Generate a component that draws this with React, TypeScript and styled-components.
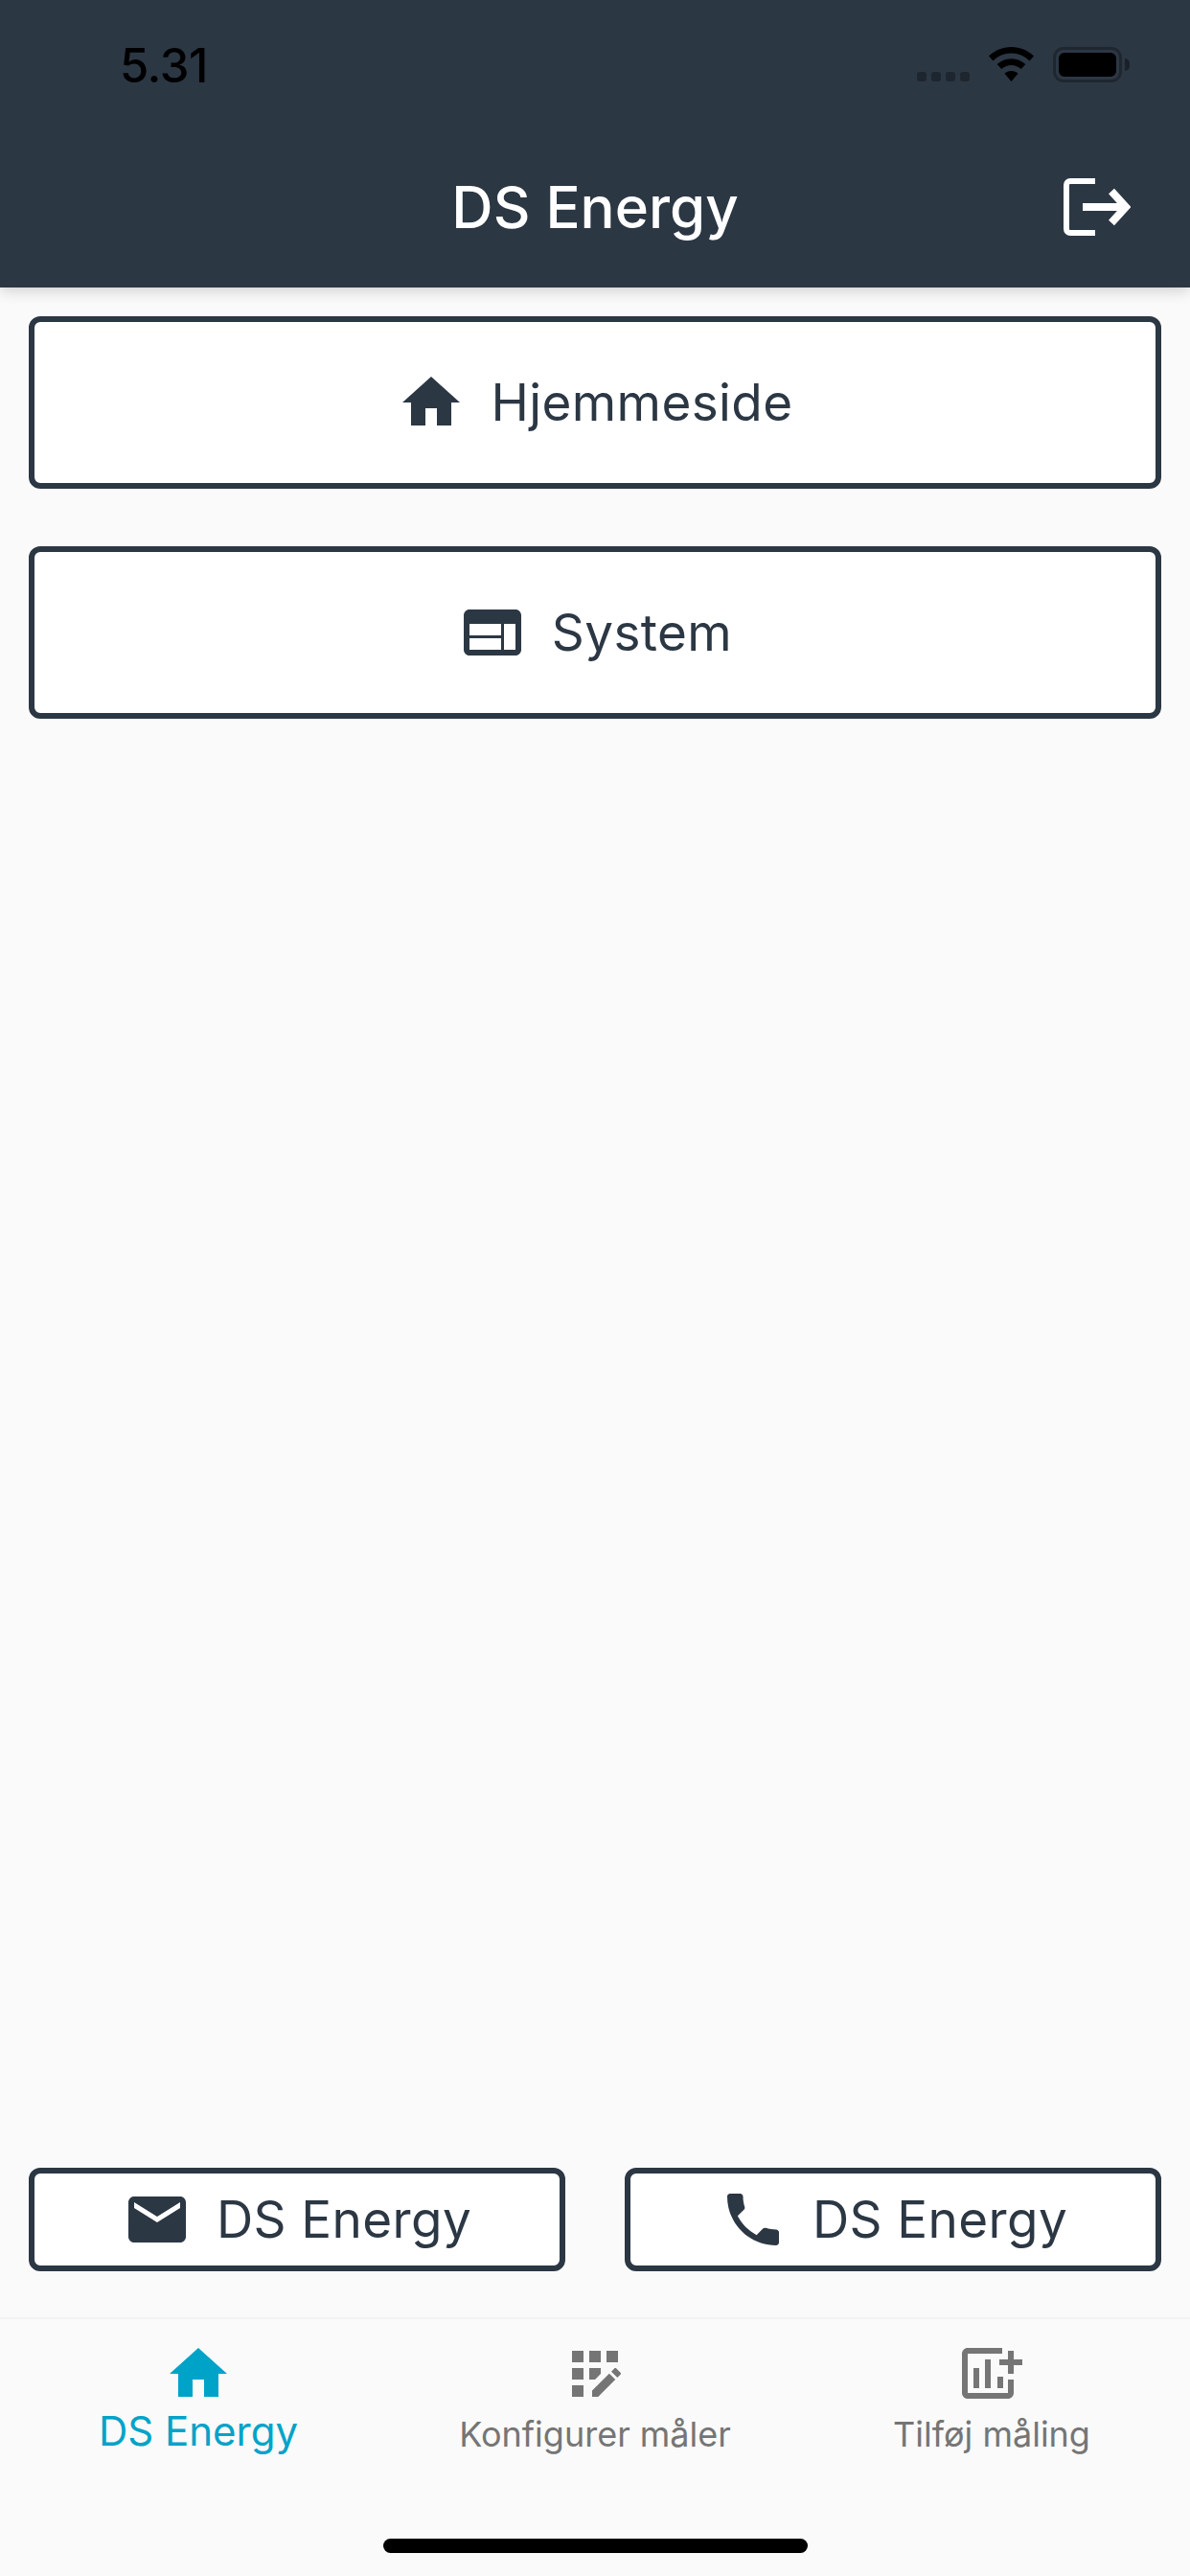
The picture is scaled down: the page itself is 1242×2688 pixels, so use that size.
import React from "react";
import styled, { createGlobalStyle } from "styled-components";

const ink = "#2c3744";
const accent = "#00a3c8";
const muted = "#757575";

const Global = createGlobalStyle`
  html, body { margin: 0; padding: 0; background: #fafafa; }
  * { box-sizing: border-box; }
`;

const Screen = styled.div`
  width: 1242px;
  height: 2688px;
  display: flex;
  flex-direction: column;
  background: #fafafa;
  font-family: Inter, "Noto Sans", sans-serif;
  overflow: hidden;
`;

const Header = styled.header`
  height: 300px;
  flex: none;
  background: ${ink};
  box-shadow: 0 4px 14px rgba(0, 0, 0, 0.16);
  display: flex;
  flex-direction: column;
  position: relative;
  z-index: 1;
`;

const StatusBar = styled.div`
  height: 132px;
  flex: none;
  display: flex;
  align-items: flex-start;
  justify-content: space-between;
  padding: 45px 71px 0 125px;
`;

const Clock = styled.span`
  font-size: 49px;
  line-height: 48px;
  font-weight: 500;
  color: #000;
  letter-spacing: -0.5px;
`;

const StatusIcons = styled.div`
  display: flex;
  align-items: flex-start;
  padding-top: 4px;
`;

const Signal = styled.div`
  display: flex;
  gap: 5px;
  margin: 26px 20px 0 0;
`;

const SignalDot = styled.span`
  width: 10px;
  height: 10px;
  border-radius: 3px;
  background: rgba(0, 0, 0, 0.32);
`;

const Battery = styled.div`
  width: 72px;
  height: 37px;
  margin-left: 20px;
  padding: 3px;
  border: 3px solid rgba(0, 0, 0, 0.3);
  border-radius: 11px;
  position: relative;
  &::after {
    content: "";
    position: absolute;
    right: -11px;
    top: 9px;
    width: 5px;
    height: 13px;
    border-radius: 0 5px 5px 0;
    background: rgba(0, 0, 0, 0.4);
  }
`;

const BatteryLevel = styled.div`
  width: 100%;
  height: 100%;
  background: #000;
  border-radius: 6px;
`;

const TitleBar = styled.div`
  flex: 1;
  display: grid;
  grid-template-columns: 1fr auto 1fr;
  align-items: center;
  padding-right: 62px;
`;

const Title = styled.h1`
  grid-column: 2;
  margin: 0 0 0 62px;
  font-size: 60px;
  line-height: 70px;
  font-weight: 500;
  color: #fff;
`;

const LogoutButton = styled.div`
  grid-column: 3;
  justify-self: end;
  display: flex;
`;

const Content = styled.main`
  flex: 1;
  display: flex;
  flex-direction: column;
  padding: 30px 30px 48px;
`;

const LinkList = styled.div`
  flex: 1;
  display: flex;
  flex-direction: column;
  gap: 60px;
`;

const OutlineButton = styled.div<{ $height: number }>`
  height: ${(p) => p.$height}px;
  display: flex;
  align-items: center;
  justify-content: center;
  gap: 26px;
  background: #fff;
  border: 6px solid ${ink};
  border-radius: 12px;
  color: ${ink};
  font-size: 53px;
  letter-spacing: 0.4px;
  line-height: 64px;
`;

const ContactRow = styled.div`
  display: grid;
  grid-template-columns: 560px 560px;
  justify-content: space-between;
`;

const TabBar = styled.nav`
  height: 270px;
  flex: none;
  display: grid;
  grid-template-columns: repeat(3, 1fr);
  align-items: start;
  background: #fafafa;
  border-top: 2px solid #f3f3f3;
  padding-top: 21px;
  position: relative;
`;

const Tab = styled.div<{ $active?: boolean }>`
  display: flex;
  flex-direction: column;
  align-items: center;
  color: ${(p) => (p.$active ? accent : muted)};
`;

const TabLabel = styled.span<{ $active?: boolean }>`
  font-size: ${(p) => (p.$active ? 42 : 36)}px;
  line-height: 48px;
  margin-top: ${(p) => (p.$active ? 0 : 3)}px;
  white-space: nowrap;
`;

const HomeIndicator = styled.div`
  position: absolute;
  left: 400px;
  bottom: 24px;
  width: 443px;
  height: 15px;
  border-radius: 8px;
  background: #000;
`;

type IconProps = { children: React.ReactNode; box?: number };

const Icon = ({ children, box = 24 }: IconProps) => (
  <svg width={72} height={72} viewBox={`0 0 ${box} ${box}`} fill="currentColor" style={{ flex: "none", display: "block" }}>
    {children}
  </svg>
);

const HomeIcon = () => (
  <Icon>
    <path d="M10 20v-6h4v6h5v-8h3L12 3 2 12h3v8z" />
  </Icon>
);

const WebIcon = () => (
  <Icon>
    <path d="M20 4H4c-1.1 0-1.99.9-1.99 2L2 18c0 1.1.9 2 2 2h16c1.1 0 2-.9 2-2V6c0-1.1-.9-2-2-2zm-5 14H4v-4h11v4zm0-5H4V9h11v4zm5 5h-4V9h4v9z" />
  </Icon>
);

const MailIcon = () => (
  <Icon>
    <path d="M20 4H4c-1.1 0-1.99.9-1.99 2L2 18c0 1.1.9 2 2 2h16c1.1 0 2-.9 2-2V6c0-1.1-.9-2-2-2zm0 4l-8 5-8-5V6l8 5 8-5v2z" />
  </Icon>
);

const PhoneIcon = () => (
  <Icon>
    <path d="M6.62 10.79c1.44 2.83 3.76 5.14 6.59 6.59l2.2-2.2c.27-.27.67-.36 1.02-.24 1.12.37 2.33.57 3.57.57.55 0 1 .45 1 1V20c0 .55-.45 1-1 1-9.39 0-17-7.61-17-17 0-.55.45-1 1-1h3.5c.55 0 1 .45 1 1 0 1.25.2 2.45.57 3.57.11.35.03.74-.25 1.02l-2.2 2.2z" />
  </Icon>
);

const RegisterIcon = () => (
  <Icon>
    <rect x="10" y="4" width="4" height="4" />
    <rect x="4" y="16" width="4" height="4" />
    <rect x="4" y="10" width="4" height="4" />
    <rect x="4" y="4" width="4" height="4" />
    <rect x="16" y="4" width="4" height="4" />
    <polygon points="11,17.86 11,20 13.1,20 19.08,14.03 16.96,11.91" />
    <polygon points="14,12.03 14,10 10,10 10,14 12.03,14" />
    <path d="M20.85,11.56l-1.41-1.41c-0.2-0.2-0.51-0.2-0.71,0l-1.06,1.06l2.12,2.12l1.06-1.06C21.05,12.07,21.05,11.76,20.85,11.56z" />
  </Icon>
);

const AddChartIcon = () => (
  <Icon box={72}>
    <path d="M47 9H11c-3.3 0-6 2.7-6 6v41c0 3.3 2.7 6 6 6h42c3.3 0 6-2.7 6-6V42h-6v14H11V15h36z" />
    <path d="M53 12h6v9h9v6h-9v9h-6v-9h-9v-6h9z" />
    <path d="M17 30h6v21h-6zM29 21h6v30h-6zM42 39h6v12h-6z" />
  </Icon>
);

const LogoutIcon = () => (
  <svg width={72} height={72} viewBox="0 0 72 72" fill="none" stroke="#fff" style={{ display: "block" }}>
    <path d="M35 9H9a4 4 0 0 0-4 4v46a4 4 0 0 0 4 4h26" strokeWidth={6} />
    <path d="M22 36h42" strokeWidth={8} />
    <path d="M52 19.5l15 16.5-15 16.5" strokeWidth={8} />
  </svg>
);

const WifiIcon = () => (
  <svg width={47} height={36} viewBox="0 0 47 36" fill="#000" style={{ display: "block" }}>
    <path d="M23.5 0C14.5 0 6.5 3.4 0 9.5l4.5 5C9.7 9.5 16.2 6.6 23.5 6.6s13.8 2.9 19 7.9l4.5-5C40.5 3.4 32.5 0 23.5 0z" />
    <path d="M23.5 12.2c-5.8 0-10.9 2.2-14.8 5.9l4.5 5c2.7-2.6 6.3-4.2 10.3-4.2s7.6 1.6 10.3 4.2l4.5-5c-3.9-3.7-9-5.9-14.8-5.9z" />
    <path d="M23.5 25c-2.8 0-5.2 1-7 2.8L23.5 36l7-8.2c-1.8-1.8-4.2-2.8-7-2.8z" />
  </svg>
);

export default function App() {
  return (
    <Screen>
      <Global />
      <Header>
        <StatusBar>
          <Clock>5.31</Clock>
          <StatusIcons>
            <Signal>
              <SignalDot />
              <SignalDot />
              <SignalDot />
              <SignalDot />
            </Signal>
            <WifiIcon />
            <Battery>
              <BatteryLevel />
            </Battery>
          </StatusIcons>
        </StatusBar>
        <TitleBar>
          <Title>DS Energy</Title>
          <LogoutButton>
            <LogoutIcon />
          </LogoutButton>
        </TitleBar>
      </Header>
      <Content>
        <LinkList>
          <OutlineButton $height={180}>
            <HomeIcon />
            Hjemmeside
          </OutlineButton>
          <OutlineButton $height={180}>
            <WebIcon />
            System
          </OutlineButton>
        </LinkList>
        <ContactRow>
          <OutlineButton $height={108}>
            <MailIcon />
            DS Energy
          </OutlineButton>
          <OutlineButton $height={108}>
            <PhoneIcon />
            DS Energy
          </OutlineButton>
        </ContactRow>
      </Content>
      <TabBar>
        <Tab $active>
          <HomeIcon />
          <TabLabel $active>DS Energy</TabLabel>
        </Tab>
        <Tab>
          <RegisterIcon />
          <TabLabel>Konfigurer måler</TabLabel>
        </Tab>
        <Tab>
          <AddChartIcon />
          <TabLabel>Tilføj måling</TabLabel>
        </Tab>
        <HomeIndicator />
      </TabBar>
    </Screen>
  );
}
